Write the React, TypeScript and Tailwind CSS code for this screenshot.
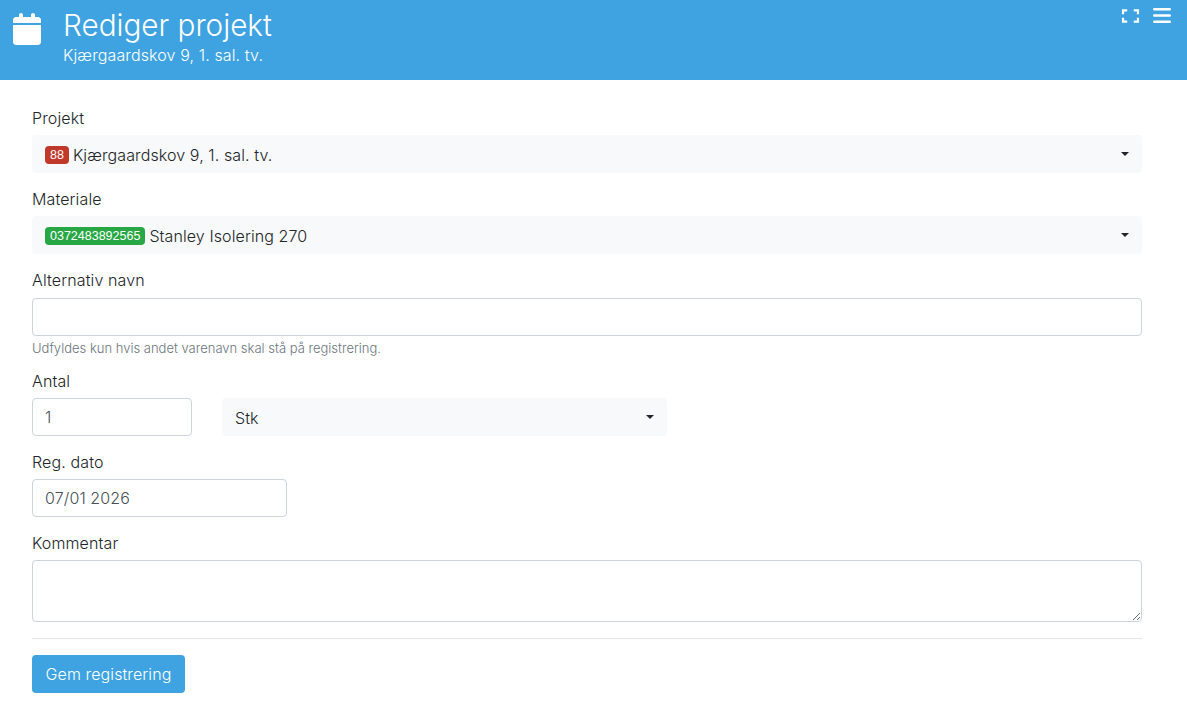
import React from "react";

const font = "font-['Inter','Noto_Sans',sans-serif] font-light";

function Label({ children }: { children: React.ReactNode }) {
  return <label className="block h-6 mb-[3px] text-[16px] leading-5 tracking-[0.12px] text-[#212529]">{children}</label>;
}

function Caret() {
  return <span className="w-0 h-0 border-x-4 border-x-transparent border-t-4 border-t-[#212529]" />;
}

function Select({ children, className = "" }: { children: React.ReactNode; className?: string }) {
  return (
    <div className={`flex h-[38px] items-center justify-between rounded bg-[#f8f9fa] pl-[13px] pr-[13px] text-[16px] tracking-[0.1px] text-[#212529] ${className}`}>
      <span className="flex items-center pt-[2px]">{children}</span>
      <Caret />
    </div>
  );
}

function Badge({ color, children }: { color: string; children: React.ReactNode }) {
  return (
    <span className={`mr-1 inline-block h-[18px] rounded-[4px] px-[5px] font-['Liberation_Sans',sans-serif] text-[12.5px] font-normal leading-[18px] tracking-normal text-white ${color}`}>
      {children}
    </span>
  );
}

const inputCls = "block h-[38px] rounded border border-[#ced4da] bg-white px-3 text-[16px] tracking-[0.1px] text-[#495057] outline-none";

export default function App() {
  return (
    <div className={`min-h-[705px] bg-white ${font}`}>
      <header className="flex h-20 justify-between bg-[#3ea3e0] text-white">
        <div className="flex">
          <svg viewBox="0 0 448 512" className="ml-[13px] mt-[13px] h-8 w-7" fill="white">
            <path d="M96 32V64H48C21.5 64 0 85.5 0 112v48H448V112c0-26.5-21.5-48-48-48H352V32c0-17.7-14.3-32-32-32s-32 14.3-32 32V64H160V32c0-17.7-14.3-32-32-32S96 14.3 96 32zM448 192H0V464c0 26.5 21.5 48 48 48H400c26.5 0 48-21.5 48-48V192z" />
          </svg>
          <div className="ml-[22px]">
            <div className="mt-[7px] text-[29.7px] leading-9">Rediger projekt</div>
            <div className="text-[16px] leading-6 tracking-[0.12px]">Kjærgaardskov 9, 1. sal. tv.</div>
          </div>
        </div>
        <div className="mr-4 mt-2 flex items-start gap-[13px]">
          <svg viewBox="0 0 19 15" className="mt-px h-[14px] w-[19px]" fill="none" stroke="white" strokeWidth="2.4">
            <path d="M1.5 5.5V1.5H6M13 1.5H17.5V5.5M17.5 9.5V13.5H13M6 13.5H1.5V9.5" />
          </svg>
          <svg viewBox="0 0 18 15" className="h-[15px] w-[18px]" fill="none" stroke="white" strokeWidth="2.4" strokeLinecap="round">
            <path d="M1.2 1.3H16.8M1.2 7.5H16.8M1.2 13.7H16.8" />
          </svg>
        </div>
      </header>

      <main className="pl-8 pr-[45px] pt-7">
        <div className="mb-4">
          <Label>Projekt</Label>
          <Select>
            <Badge color="bg-[#c0392b]">88</Badge>
            Kjærgaardskov 9, 1. sal. tv.
          </Select>
        </div>
        <div className="mb-4">
          <Label>Materiale</Label>
          <Select>
            <Badge color="bg-[#28a745]">0372483892565</Badge>
            Stanley Isolering 270
          </Select>
        </div>
        <div className="mb-[14px]">
          <Label>Alternativ navn</Label>
          <input className={`${inputCls} mt-1 w-full`} />
          <div className="mt-[3px] h-[18px] text-[13px] leading-[18px] text-[#6c757d]">
            Udfyldes kun hvis andet varenavn skal stå på registrering.
          </div>
        </div>
        <div className="mb-4">
          <Label>Antal</Label>
          <div className="flex gap-[30px]">
            <input className={`${inputCls} w-40`} defaultValue="1" />
            <Select className="w-[445px]">Stk</Select>
          </div>
        </div>
        <div className="mb-4">
          <Label>Reg. dato</Label>
          <input className={`${inputCls} w-[255px]`} defaultValue="07/01 2026" />
        </div>
        <div className="mb-4">
          <Label>Kommentar</Label>
          <textarea className="block h-[62px] w-full rounded border border-[#ced4da] bg-white px-3 py-1.5 text-[16px] outline-none" />
        </div>
        <hr className="border-0 border-t border-[#e3e5e8]" />
        <button className="mt-4 h-[38px] w-[153px] rounded bg-[#3ea3e0] text-[16px] tracking-[0.1px] text-white">Gem registrering</button>
      </main>
    </div>
  );
}
